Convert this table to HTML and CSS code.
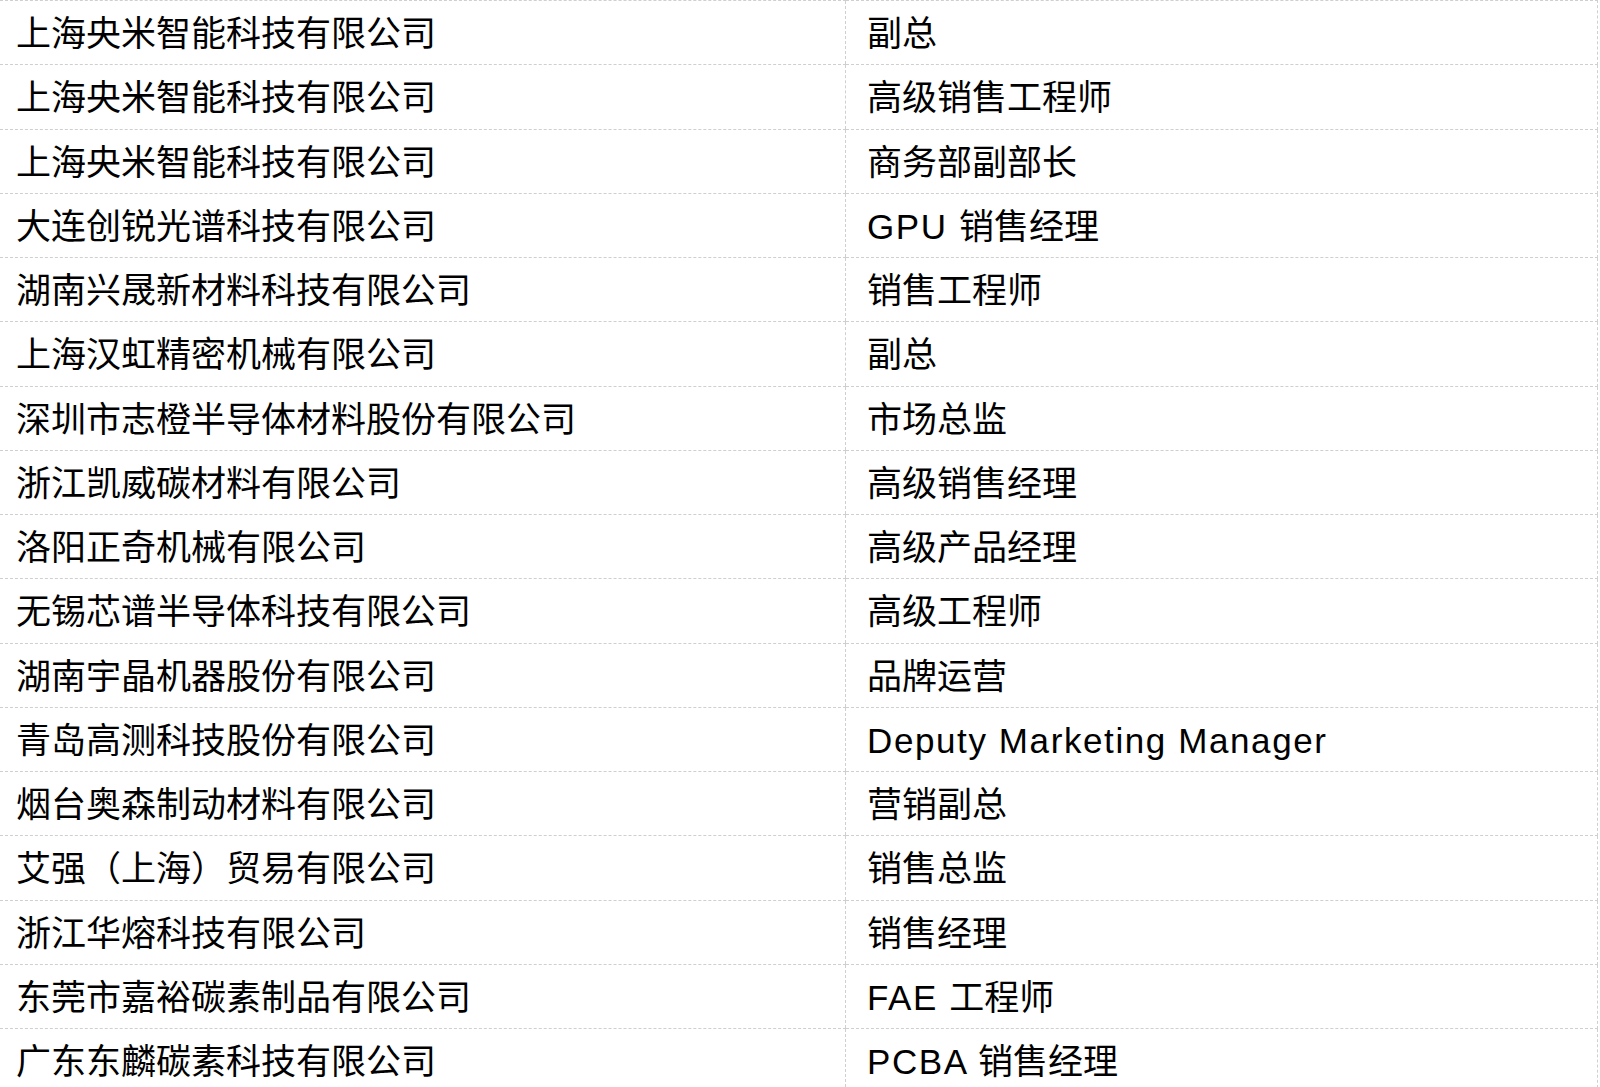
FILE: index.html
```html
<!DOCTYPE html>
<html lang="zh-CN">
<head>
<meta charset="utf-8">
<link rel="stylesheet" href="styles.css">
</head>
<body>
<table class="list">
<tr><td class="co">上海央米智能科技有限公司</td><td class="ti">副总</td></tr>
<tr><td class="co">上海央米智能科技有限公司</td><td class="ti">高级销售工程师</td></tr>
<tr><td class="co">上海央米智能科技有限公司</td><td class="ti">商务部副部长</td></tr>
<tr><td class="co">大连创锐光谱科技有限公司</td><td class="ti"><span class="en">GPU </span>销售经理</td></tr>
<tr><td class="co">湖南兴晟新材料科技有限公司</td><td class="ti">销售工程师</td></tr>
<tr><td class="co">上海汉虹精密机械有限公司</td><td class="ti">副总</td></tr>
<tr><td class="co">深圳市志橙半导体材料股份有限公司</td><td class="ti">市场总监</td></tr>
<tr><td class="co">浙江凯威碳材料有限公司</td><td class="ti">高级销售经理</td></tr>
<tr><td class="co">洛阳正奇机械有限公司</td><td class="ti">高级产品经理</td></tr>
<tr><td class="co">无锡芯谱半导体科技有限公司</td><td class="ti">高级工程师</td></tr>
<tr><td class="co">湖南宇晶机器股份有限公司</td><td class="ti">品牌运营</td></tr>
<tr><td class="co">青岛高测科技股份有限公司</td><td class="ti"><span class="en">Deputy Marketing Manager</span></td></tr>
<tr><td class="co">烟台奥森制动材料有限公司</td><td class="ti">营销副总</td></tr>
<tr><td class="co">艾强（上海）贸易有限公司</td><td class="ti">销售总监</td></tr>
<tr><td class="co">浙江华熔科技有限公司</td><td class="ti">销售经理</td></tr>
<tr><td class="co">东莞市嘉裕碳素制品有限公司</td><td class="ti"><span class="en">FAE </span>工程师</td></tr>
<tr><td class="co">广东东麟碳素科技有限公司</td><td class="ti"><span class="en">PCBA </span>销售经理</td></tr>
</table>
</body>
</html>
```
FILE: styles.css
```css
html, body {
  margin: 0;
  padding: 0;
  background: #fff;
}
.list {
  border-collapse: collapse;
  width: 1598px;
  table-layout: fixed;
  font-family: "Liberation Sans", "Noto Sans CJK SC", sans-serif;
  font-size: 35px;
  color: #000;
}
.list td {
  height: 61.25px;
  padding: 2px 0 0 16px;
  border-top: 1px dashed #cfcfcf;
  border-bottom: 1px dashed #cfcfcf;
  vertical-align: middle;
  white-space: nowrap;
  line-height: 1;
}
.list td.co {
  width: 829px;
}
.list td.ti {
  padding-left: 21px;
  border-left: 1px dashed #cfcfcf;
  border-right: 1px dashed #cfcfcf;
}
.en {
  letter-spacing: 1.6px;
}
```
